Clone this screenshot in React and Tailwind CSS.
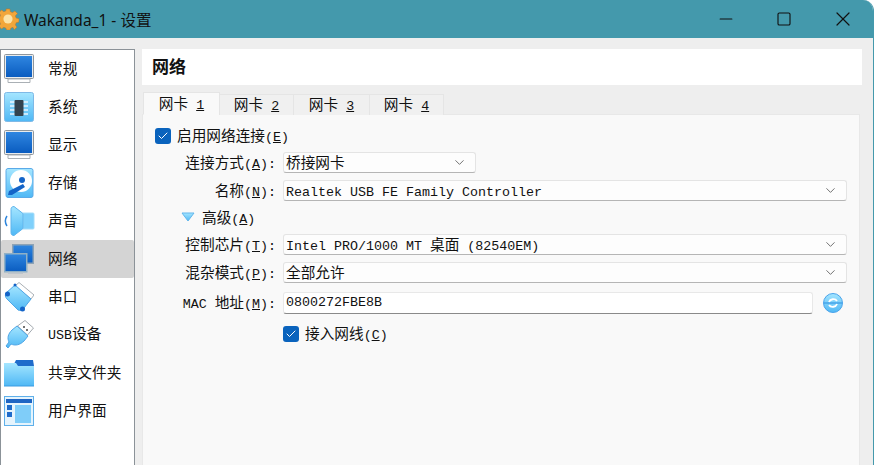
import { ChevronDown, Minus, Square, X, Check } from 'lucide-react';

const CJK = '"Noto Sans CJK SC", sans-serif';

// ascii runs get the mono face, "&A" underlines the mnemonic
function Mixed({ text }) {
  const parts = text.split(/([\x00-\x7f]+)/).filter(Boolean);
  return parts.map((part, i) => {
    if (!/^[\x00-\x7f]/.test(part)) return <span key={i}>{part}</span>;
    const bits = part.split(/&(.)/);
    return (
      <span key={i} className="font-['Liberation_Mono'] text-[13.33px]">
        {bits.map((b, j) => (j % 2 ? <u key={j}>{b}</u> : <span key={j} className="whitespace-pre">{b}</span>))}
      </span>
    );
  });
}

const Grad = ({ id, from, to }) => (
  <linearGradient id={id} x1="0" y1="0" x2="0" y2="1">
    <stop offset="0" stopColor={from} />
    <stop offset="1" stopColor={to} />
  </linearGradient>
);

function Defs() {
  return (
    <svg width="0" height="0" className="absolute">
      <defs>
        <Grad id="blue" from="#2f86e0" to="#0a5cc0" />
        <Grad id="sky" from="#a5e6ff" to="#4fb8f5" />
      </defs>
    </svg>
  );
}

const Monitor = () => (
  <svg viewBox="0 0 30 30" className="w-[30px] h-[30px]">
    <rect x="0.5" y="0.5" width="29" height="24" rx="1" fill="#e9ecee" stroke="#8f969c" />
    <rect x="2" y="2" width="26" height="21" fill="url(#blue)" />
    <path d="M4 25h22v3.500H4z" fill="#fff" stroke="#aab0b5" />
  </svg>
);

const Chip = () => (
  <svg viewBox="0 0 30 30" className="w-[30px] h-[30px]">
    <rect x="0.5" y="0.5" width="29" height="29" rx="2" fill="url(#sky)" stroke="#7fb9e6" />
    <path d="M6 10h18M6 14h18M6 18h18M6 22h18" stroke="#eaf6ff" strokeWidth="1.5" />
    <rect x="10.5" y="8" width="9" height="16" rx="1" fill="#33434f" />
  </svg>
);

const Disk = () => (
  <svg viewBox="0 0 30 30" className="w-[30px] h-[30px]">
    <rect x="2" y="0.5" width="27" height="29" rx="2" fill="url(#sky)" stroke="#5aaae8" />
    <circle cx="17" cy="13" r="11" fill="#fff" />
    <circle cx="18" cy="12" r="3" fill="#1464c8" />
    <path d="M4 27l1-4 14-7 2 3-13 8z" fill="#1464c8" />
  </svg>
);

const Speaker = () => (
  <svg viewBox="0 0 32 30" className="w-[32px] h-[30px] -ml-[1px] -mr-[1px]">
    <path d="M20 7h10a1 1 0 0 1 1 1v14a1 1 0 0 1-1 1H20z" fill="#7fd0fb" stroke="#a5dcf8" />
    <path d="M11 0.500l9 7v15l-9 7c-2 0-3-1-3-3V3.500c0-2 1-3 3-3z" fill="url(#sky)" stroke="#5fb4ec" />
    <path d="M4 10c-2 3-2 7 0 10" fill="none" stroke="#2f86dc" strokeWidth="1.500" />
  </svg>
);

const Network = () => (
  <svg viewBox="0 0 30 30" className="w-[30px] h-[30px]">
    <rect x="8.750" y="0.750" width="20.500" height="18.500" fill="url(#blue)" stroke="#8ea3b5" strokeWidth="1.500" />
    <rect x="0.750" y="9.750" width="22" height="18" fill="url(#blue)" stroke="#8fb0c6" strokeWidth="1.500" />
    <path d="M4 29h15" stroke="#b8c2ca" strokeWidth="1.500" />
  </svg>
);

const Serial = () => (
  <svg viewBox="0 0 30 30" className="w-[30px] h-[30px]">
    <path d="M15 0.500L30 13l-3 4L11 4z" fill="#fff" stroke="#a9afb4" />
    <path d="M11 3l16 14-7 9c-2 2-4 3-6 2L3 17c-2-2-2-4-1-6z" fill="url(#sky)" stroke="#4fa6e6" />
    <circle cx="3.500" cy="12" r="2.500" fill="#1464c8" />
    <circle cx="18.500" cy="27" r="2.500" fill="#1464c8" />
    <circle cx="11" cy="3" r="1.500" fill="#1464c8" />
  </svg>
);

const Usb = () => (
  <svg viewBox="0 0 30 30" className="w-[30px] h-[30px]">
    <path d="M21 0.500l8.500 7.500-6 7-10-9z" fill="#fff" stroke="#a4aab0" />
    <circle cx="20" cy="7" r="1" fill="#444" />
    <circle cx="23" cy="10" r="1" fill="#444" />
    <path d="M13 6l11 10-4 5c-4 4-9 5-13 3l-3 4-2-2 3-4c-2-4-1-8 3-12z" fill="url(#sky)" stroke="#4fa6e6" />
  </svg>
);

const Folder = () => (
  <svg viewBox="0 0 30 30" className="w-[30px] h-[30px]">
    <path d="M12 2h17l1 6H9z" fill="#1f6ccb" />
    <path d="M0 5h12l2 3h16v20H0z" fill="url(#sky)" />
    <path d="M0 28h30" stroke="#3d9be0" />
  </svg>
);

const Window = () => (
  <svg viewBox="0 0 30 30" className="w-[30px] h-[30px]">
    <rect x="0.5" y="0.5" width="29" height="29" fill="#e5f4fd" stroke="#5fb0ea" />
    <rect x="2" y="3" width="26" height="4" fill="#1f66c4" />
    <rect x="3" y="9" width="5" height="5" fill="#1f6ccb" />
    <rect x="3" y="16" width="5" height="5" fill="#1f6ccb" />
    <rect x="11" y="9" width="16" height="18" fill="#7fcdf9" />
  </svg>
);

const Gear = () => (
  <svg viewBox="0 0 24 24" className="w-[22px] h-[22px] -ml-[3px]">
    <path
      d="M10 1h4l.6 3 2.300 1 2.600-1.700 2.800 2.800L20 8.700l1 2.300 3 .6v3.800l-3 .6-1 2.300 1.700 2.600-2.800 2.800L17.300 21.100l-2.300 1-.6 2h-4l-.6-2-2.300-1-2.600 1.700-2.800-2.800L3.800 17.400l-1-2.300-3-.6v-3.800l3-.6 1-2.300L2.100 5.100l2.800-2.800L7.500 4l2.300-1z"
      fill="#f2a63a"
      stroke="#b9772a"
      strokeWidth="0.6"
    />
    <circle cx="12" cy="12" r="5" fill="#fbe3a8" />
  </svg>
);

const Refresh = () => (
  <svg viewBox="0 0 20 20" className="w-5 h-5 block">
    <circle cx="10" cy="10" r="9.500" fill="url(#sky)" stroke="#4aa3ea" />
    <path d="M1 10h18" stroke="#2f8fe0" strokeWidth="1" />
    <path d="M6 9c1-3 6-4 8-1M14 11c-1 3-6 4-8 1" fill="none" stroke="#fff" strokeWidth="1.800" />
  </svg>
);

const navItems = [
  { label: '常规', Icon: Monitor },
  { label: '系统', Icon: Chip },
  { label: '显示', Icon: Monitor },
  { label: '存储', Icon: Disk },
  { label: '声音', Icon: Speaker },
  { label: '网络', Icon: Network, active: true },
  { label: '串口', Icon: Serial },
  { label: 'USB设备', Icon: Usb },
  { label: '共享文件夹', Icon: Folder },
  { label: '用户界面', Icon: Window },
];

const tabs = [
  { label: '网卡 &1', cls: 'w-[77px] h-[23px] pt-[2px] bg-[#f9f9f9] border-b-[#f9f9f9]' },
  { label: '网卡 &2', cls: 'w-[75px] h-[21px] bg-[#f0f0f0] -ml-[1px] border-b-0' },
  { label: '网卡 &3', cls: 'w-[77px] h-[21px] bg-[#f0f0f0] -ml-[1px] border-b-0' },
  { label: '网卡 &4', cls: 'w-[75px] h-[21px] bg-[#f0f0f0] -ml-[1px] border-b-0' },
];

function Field({ label, children }) {
  return (
    <>
      <div className="h-[20px] leading-[20px] -translate-y-[1px] pr-[1px] text-right whitespace-nowrap">
        <Mixed text={label} />
      </div>
      {children}
    </>
  );
}

function Select({ value, className = '' }) {
  return (
    <div className={`h-[21px] pl-[2px] pr-[8px] flex items-center justify-between bg-[#fdfdfd] border border-[#e4e4e4] border-b-[#b5b5b5] rounded-[3px] ${className}`}>
      <span className="h-[20px] leading-[20px] -translate-y-[1px] whitespace-nowrap">
        <Mixed text={value} />
      </span>
      <ChevronDown size={15} strokeWidth={1.2} className="text-[#444]" />
    </div>
  );
}

function Checkbox() {
  return (
    <span className="w-4 h-4 rounded-[3px] bg-[#0a63bd] flex items-center justify-center shrink-0">
      <Check size={12} strokeWidth={2} className="text-white" />
    </span>
  );
}

export default function App() {
  return (
    <div className="w-[875px] h-[465px] overflow-hidden bg-white text-[14.67px] leading-5 text-[#111]" style={{ fontFamily: CJK }}>
      <Defs />
      <div className="w-[874px] h-full flex flex-col bg-[#eeeeee] border-r border-[#4499ac] rounded-tr-[11px] overflow-hidden">
        <header className="h-[38px] shrink-0 bg-[#4499ac] flex items-center">
          <Gear />
          <span className="ml-[5px] text-[15.5px] font-['Noto_Sans'] flex-1">
            Wakanda_1 - <span style={{ fontFamily: CJK }}>设置</span>
          </span>
          <div className="flex items-center text-[#111]">
            <Minus size={20} strokeWidth={1.4} className="mr-[40px]" />
            <Square size={16} strokeWidth={1.7} className="mr-[39px]" />
            <X size={24} strokeWidth={1.2} className="mr-[18px]" />
          </div>
        </header>

        <div className="flex-1 flex min-h-0 pt-[11px]">
          <nav className="w-[135px] shrink-0 bg-white border border-b-0 border-[#8b9298]">
            {navItems.map(({ label, Icon, active }) => (
              <div key={label} className={`h-[38px] flex items-center pl-[3px] rounded-[2px] ${active ? 'bg-[#d4d4d4]' : ''}`}>
                <Icon />
                <span className="ml-[14px] -translate-y-[1px] whitespace-nowrap">
                  <Mixed text={label} />
                </span>
              </div>
            ))}
          </nav>

          <main className="flex-1 min-w-0 ml-[7px] mr-[11px]">
            <div className="h-[36px] bg-white flex items-center pl-[10px] pb-[3px] text-[17px] font-bold">网络</div>

            <div className="flex items-end h-[30px] pl-[1px] mr-[2px] relative z-10">
              {tabs.map((tab) => (
                <div key={tab.label} className={`border border-[#e5e5e5] flex items-center justify-center ${tab.cls}`}>
                  <span className="whitespace-pre">
                    <Mixed text={tab.label} />
                  </span>
                </div>
              ))}
            </div>

            <div className="h-[352px] mr-[2px] -mt-[1px] bg-[#f9f9f9] border border-[#e8e8e8] pt-[11px] pr-[12px] pl-[12px]">
              <div className="flex items-center gap-[6px] h-5">
                <Checkbox />
                <span><Mixed text="启用网络连接(&E)" /></span>
              </div>

              <div className="grid grid-cols-[122px_1fr] gap-x-[6px] mt-[6px] items-center">
                <Field label="连接方式(&A):">
                  <Select value="桥接网卡" className="w-[193px]" />
                </Field>
                <div className="h-[7px] col-span-2" />
                <Field label="名称(&N):">
                  <Select value="Realtek USB FE Family Controller" />
                </Field>
              </div>

              <div className="flex items-center h-5 mt-[6px] pl-[26px]">
                <svg viewBox="0 0 14 10" className="w-[14px] h-[10px]">
                  <path d="M1 1h12L7 9z" fill="url(#sky)" stroke="#62b6ec" />
                </svg>
                <span className="ml-[7px] translate-y-[1px]"><Mixed text="高级(&A)" /></span>
              </div>

              <div className="grid grid-cols-[122px_1fr] gap-x-[6px] mt-[7px] items-center">
                <Field label="控制芯片(&T):">
                  <Select value="Intel PRO/1000 MT 桌面 (82540EM)" />
                </Field>
                <div className="h-[7px] col-span-2" />
                <Field label="混杂模式(&P):">
                  <Select value="全部允许" />
                </Field>
                <div className="h-[9px] col-span-2" />
                <Field label="MAC 地址(&M):">
                  <div className="flex items-center">
                    <div className="h-[22px] flex-1 bg-white border border-[#e8e8e8] border-b-[#8a8a8a] rounded-[3px] pl-[2px] flex items-center">
                      <Mixed text="0800272FBE8B" />
                    </div>
                    <span className="ml-[10px] mr-[4px]"><Refresh /></span>
                  </div>
                </Field>
                <div className="h-[10px] col-span-2" />
                <div />
                <div className="flex items-center gap-[6px] h-5">
                  <Checkbox />
                  <span><Mixed text="接入网线(&C)" /></span>
                </div>
              </div>
            </div>
          </main>
        </div>
      </div>
    </div>
  );
}
